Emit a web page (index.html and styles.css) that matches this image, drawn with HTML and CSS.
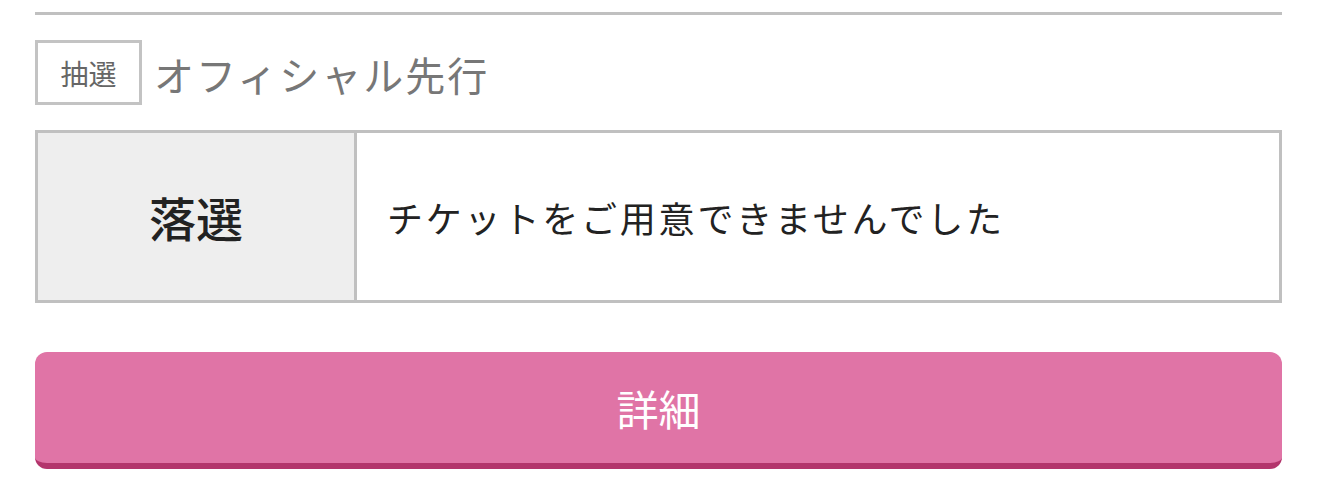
FILE: index.html
```html
<!DOCTYPE html>
<html lang="ja">
<head>
<meta charset="utf-8">
<link rel="stylesheet" href="styles.css">
</head>
<body>
<div class="wrap">
  <div class="entry">
    <div class="head">
      <span class="badge">抽選</span>
      <span class="title">オフィシャル先行</span>
    </div>
    <div class="result">
      <div class="status">落選</div>
      <div class="message">チケットをご用意できませんでした</div>
    </div>
    <a class="detail-btn" href="#">詳細</a>
  </div>
</div>
</body>
</html>
```
FILE: styles.css
```css
* { box-sizing: border-box; }
html, body { margin: 0; padding: 0; background: #fff; }
body {
  font-family: "Noto Sans CJK JP", "Noto Sans", sans-serif;
  color: #222;
}
.wrap { padding: 12px 37px 17px 35px; }
.entry { border-top: 3px solid #c0c0c0; padding-top: 25px; }
.head {
  display: flex;
  align-items: center;
  gap: 12px;
  height: 65px;
}
.badge {
  width: 107px;
  height: 65px;
  border: 3px solid #c3c3c3;
  display: flex;
  align-items: center;
  justify-content: center;
  font-size: 28px;
  color: #666;
  line-height: 1;
}
.title {
  font-size: 40px;
  color: #777;
  line-height: 1;
  letter-spacing: 2px;
  margin-top: 2px;
}
.result {
  margin-top: 25px;
  display: flex;
  height: 173px;
  border: 3px solid #c0c0c0;
}
.status {
  width: 319px;
  flex: none;
  background: #eeeeee;
  border-right: 3px solid #c0c0c0;
  display: flex;
  align-items: center;
  justify-content: center;
  font-size: 47px;
  font-weight: 500;
  color: #222;
}
.message {
  flex: 1;
  display: flex;
  align-items: center;
  padding-left: 30px;
  font-size: 36px;
  letter-spacing: 2.8px;
  color: #222;
}
.detail-btn {
  margin-top: 49px;
  display: flex;
  align-items: center;
  justify-content: center;
  height: 117px;
  background: #e074a6;
  border-radius: 12px;
  border-bottom: 6px solid #b3356c;
  color: #fff;
  font-size: 42px;
  text-decoration: none;
}
```
